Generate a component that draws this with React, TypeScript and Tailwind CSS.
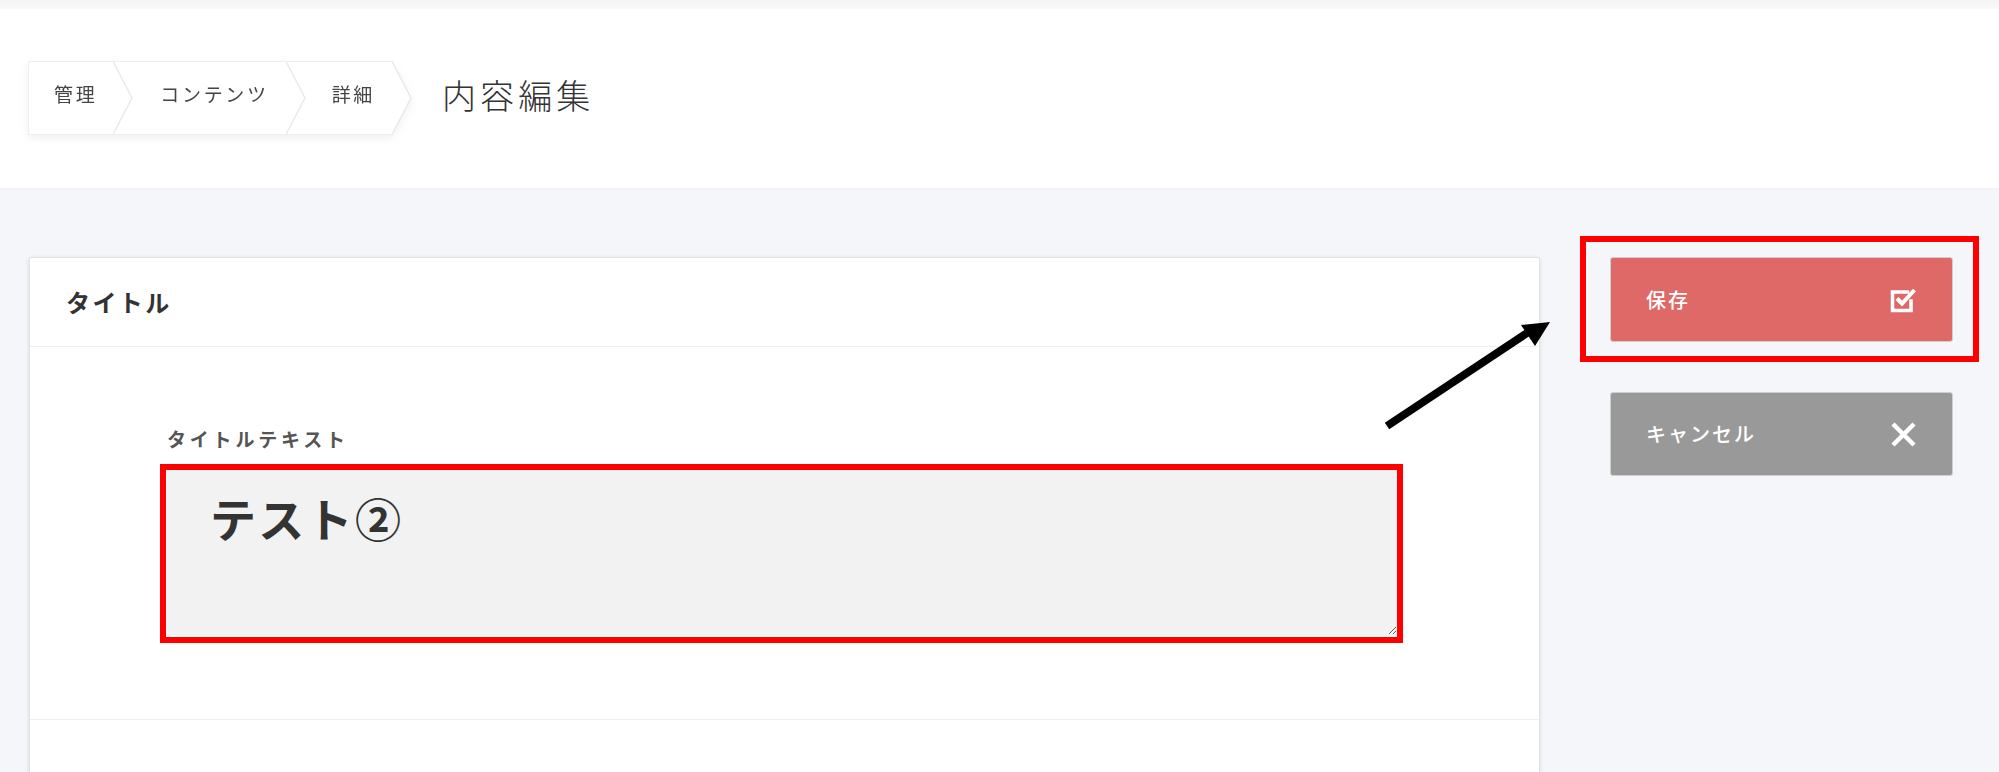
import React from 'react'

const jp = "font-['Noto_Sans_CJK_JP','Noto_Sans',sans-serif]"

const Chevron = ({ last }: { last?: boolean }) => (
  <svg width="20" height="74" viewBox="0 0 20 74" className="block shrink-0">
    {last ? (
      <path d="M0 0.5 L19 37 L0 73.5" fill="#ffffff" stroke="#e9e9e9" strokeWidth="1.5" />
    ) : (
      <>
        <rect x="0" y="0" width="20" height="74" fill="#ffffff" />
        <line x1="0" y1="0.5" x2="20" y2="0.5" stroke="#efefef" />
        <line x1="0" y1="73.5" x2="20" y2="73.5" stroke="#efefef" />
        <path d="M0 0.5 L19 37 L0 73.5" fill="none" stroke="#e9e9e9" strokeWidth="1.5" />
      </>
    )}
  </svg>
)

const Crumb = ({ label, first, pl, pr }: { label: string; first?: boolean; pl: string; pr: string }) => (
  <div
    className={`h-[74px] flex items-center bg-white border-y border-[#efefef] ${first ? 'border-l' : ''} ${pl} ${pr} pb-[8px] text-[19px] tracking-[0.14em] text-[#444]`}
  >
    {label}
  </div>
)

const CheckIcon = () => (
  <svg width="27" height="26" viewBox="0 0 27 26">
    <path d="M17.5 5 H2.5 V23.5 H21 V14" fill="none" stroke="#ffffff" strokeWidth="3.5" strokeLinecap="square" />
    <path d="M7 11.5 L12 16.5 L24.5 3" fill="none" stroke="#ffffff" strokeWidth="4" />
  </svg>
)

const CloseIcon = () => (
  <svg width="27" height="27" viewBox="0 0 27 27">
    <path d="M3 3 L24 24 M24 3 L3 24" fill="none" stroke="#ffffff" strokeWidth="4.5" />
  </svg>
)

const App = () => {
  return (
    <div className={`relative w-[1999px] h-[772px] overflow-hidden bg-[#f5f6fa] ${jp}`}>
      {/* header */}
      <div className="bg-white h-[188px] shadow-[0_1px_3px_rgba(0,0,0,0.04)]">
        <div className="h-[9px] bg-gradient-to-b from-[#f3f3f3] to-[#fafafa]" />
        <div className="flex items-center pl-[28px] pt-[52px]">
          <div className="flex items-stretch drop-shadow-[0_3px_4px_rgba(0,0,0,0.06)]">
            <Crumb label="管理" first pl="pl-[25px]" pr="pr-[16px]" />
            <Chevron />
            <Crumb label="コンテンツ" pl="pl-[27px]" pr="pr-[17px]" />
            <Chevron />
            <Crumb label="詳細" pl="pl-[26px]" pr="pr-[17px]" />
            <Chevron last />
          </div>
          <h1 className="ml-[30px] pb-[8px] text-[34px] tracking-[0.12em] text-[#333] font-light">内容編集</h1>
        </div>
      </div>

      {/* body */}
      <div className="flex items-start pl-[29px] pt-[69px] gap-[70px]">
        <div className="w-[1511px] bg-white border border-[#e3e3e3] rounded-[2px] shadow-[0_1px_4px_rgba(0,0,0,0.12)]">
          <div className="h-[89px] flex items-center pl-[36px] border-b border-[#efefef]">
            <h2 className="text-[24px] font-bold tracking-[0.1em] text-[#333]">タイトル</h2>
          </div>
          <div className="pl-[137px] pr-[142px] pt-[79px] pb-[84px] border-b border-[#efefef]">
            <label className="block leading-[26px] text-[19px] font-bold tracking-[0.2em] text-[#555]">
              タイトルテキスト
            </label>
            <div className="relative mt-[18px]">
              <textarea
                defaultValue="テスト②"
                className="block w-full h-[165px] bg-[#f2f2f2] pl-[43px] pt-[13px] text-[46px] leading-[1.5] font-bold tracking-[0.05em] text-[#333] outline-none"
              />
              <div className="absolute -left-[7px] -right-[6px] -top-[6px] -bottom-[8px] border-[6px] border-[#ff0000] pointer-events-none" />
            </div>
          </div>
          <div className="h-[120px]" />
        </div>

        <div className="w-[343px] flex flex-col gap-[50px]">
          <div className="relative">
            <button className="w-full h-[85px] flex items-center justify-between pl-[35px] pr-[35px] bg-[#de6967] border border-[#cfcfcf] rounded-[3px] text-white text-[20px] font-medium tracking-[0.1em]">
              <span>保存</span>
              <CheckIcon />
            </button>
            <div className="absolute -left-[30px] -right-[26px] -top-[21px] -bottom-[20px] border-[6px] border-[#ff0000] pointer-events-none" />
          </div>
          <button className="w-full h-[84px] flex items-center justify-between pl-[35px] pr-[35px] bg-[#999999] border border-[#cfcfcf] rounded-[3px] text-white text-[20px] font-medium tracking-[0.1em]">
            <span>キャンセル</span>
            <CloseIcon />
          </button>
        </div>
      </div>

      {/* annotation arrow */}
      <svg className="absolute left-[1375px] top-[315px]" width="185" height="120" viewBox="0 0 185 120">
        <line x1="12" y1="111" x2="152" y2="18" stroke="#000000" strokeWidth="8" />
        <polygon points="175,7 160,31 146,10" fill="#000000" />
      </svg>
    </div>
  )
}

export default App
